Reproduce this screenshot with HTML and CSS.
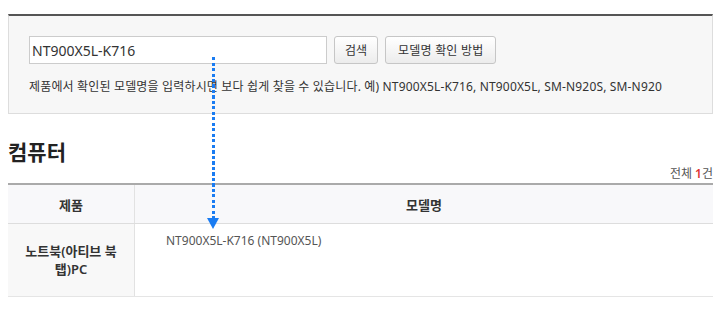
FILE: index.html
```html
<!DOCTYPE html>
<html lang="ko">
<head>
    <meta charset="UTF-8">
    <title>모델명 검색</title>
    <link rel="stylesheet" href="styles.css">
</head>
<body>
    <div class="page">
        <div class="search-box">
            <form class="search-form">
                <input type="text" class="search-input" value="NT900X5L-K716">
                <button type="button" class="btn">검색</button>
                <button type="button" class="btn btn-wide">모델명 확인 방법</button>
            </form>
            <p class="search-help">제품에서 확인된 모델명을 입력하시면 보다 쉽게 찾을 수 있습니다. 예) NT900X5L-K716, NT900X5L, SM-N920S, SM-N920</p>
        </div>

        <h2 class="section-title">컴퓨터</h2>
        <div class="total">전체 <em>1</em>건</div>

        <table class="result-table">
            <thead>
                <tr>
                    <th class="col-product">제품</th>
                    <th>모델명</th>
                </tr>
            </thead>
            <tbody>
                <tr>
                    <th class="col-product">노트북(아티브 북<br>탭)PC</th>
                    <td>NT900X5L-K716 (NT900X5L)</td>
                </tr>
            </tbody>
        </table>

        <!-- 입력창에서 결과로 이어지는 화살표 -->
        <div class="guide-arrow">
            <span class="guide-line"></span>
            <span class="guide-head"></span>
        </div>
    </div>
</body>
</html>
```

FILE: styles.css
```css
body {
    margin: 0;
    padding: 14px 8px 0;
    font-family: 'Noto Sans', 'Noto Sans CJK KR', sans-serif;
    color: #333;
    background-color: #fff;
}

.page {
    position: relative;
    width: 705px;
}

.search-box {
    border-top: 2px solid #555;
    border-left: 1px solid #ddd;
    border-right: 1px solid #ddd;
    border-bottom: 1px solid #ddd;
    background-color: #f7f7f7;
    padding: 20px 20px 0;
    height: 77px;
}

.search-form {
    display: flex;
    gap: 7px;
    margin: 0;
}

.search-input {
    width: 298px;
    height: 28px;
    box-sizing: border-box;
    border: 1px solid #ccc;
    background-color: #fff;
    padding: 0 2px;
    font-family: inherit;
    font-size: 14px;
    color: #333;
}

.btn {
    height: 28px;
    padding: 0 10px;
    border: 1px solid #c6c6c6;
    border-radius: 3px;
    background: linear-gradient(#fff, #ececec);
    font-family: inherit;
    font-size: 12px;
    color: #333;
    cursor: pointer;
}

.btn-wide {
    padding: 0 12px;
    letter-spacing: 0.2px;
}

.search-help {
    margin: 13px 0 0;
    font-size: 12px;
    letter-spacing: 0.16px;
    color: #333;
}

.section-title {
    margin: 24px 0 0;
    font-size: 21px;
    font-weight: bold;
    color: #222;
    line-height: 28px;
}

.total {
    text-align: right;
    font-size: 12px;
    color: #555;
    line-height: 16px;
    margin-top: 0;
}

.total em {
    font-style: normal;
    font-weight: 600;
    color: #e0322f;
}

.result-table {
    width: 100%;
    border-collapse: collapse;
    margin-top: 1px;
    border-top: 2px solid #aaa;
    font-size: 13px;
}

.result-table thead th {
    height: 38px;
    padding: 0;
    background-color: #f8f8fa;
    border-bottom: 1px solid #ddd;
    font-weight: 600;
    color: #333;
}

.result-table th.col-product {
    width: 126px;
    border-right: 1px solid #e2e2e2;
}

.result-table tbody th {
    height: 73px;
    background-color: #f8f8f8;
    font-weight: 600;
    line-height: 18px;
    border-bottom: 1px solid #e5e5e5;
    padding: 10px 4px;
    box-sizing: border-box;
}

.result-table tbody td {
    vertical-align: top;
    padding: 8px 31px;
    font-size: 12px;
    color: #555;
    border-bottom: 1px solid #e5e5e5;
}

.guide-arrow {
    position: absolute;
    left: 199px;
    top: 43px;
    width: 12px;
    display: flex;
    flex-direction: column;
    align-items: center;
}

.guide-line {
    width: 3px;
    height: 161px;
    background: repeating-linear-gradient(#1a7cf2 0, #1a7cf2 3px, transparent 3px, transparent 5.5px);
}

.guide-head {
    width: 0;
    height: 0;
    border-left: 6px solid transparent;
    border-right: 6px solid transparent;
    border-top: 11px solid #1a7cf2;
}
```
